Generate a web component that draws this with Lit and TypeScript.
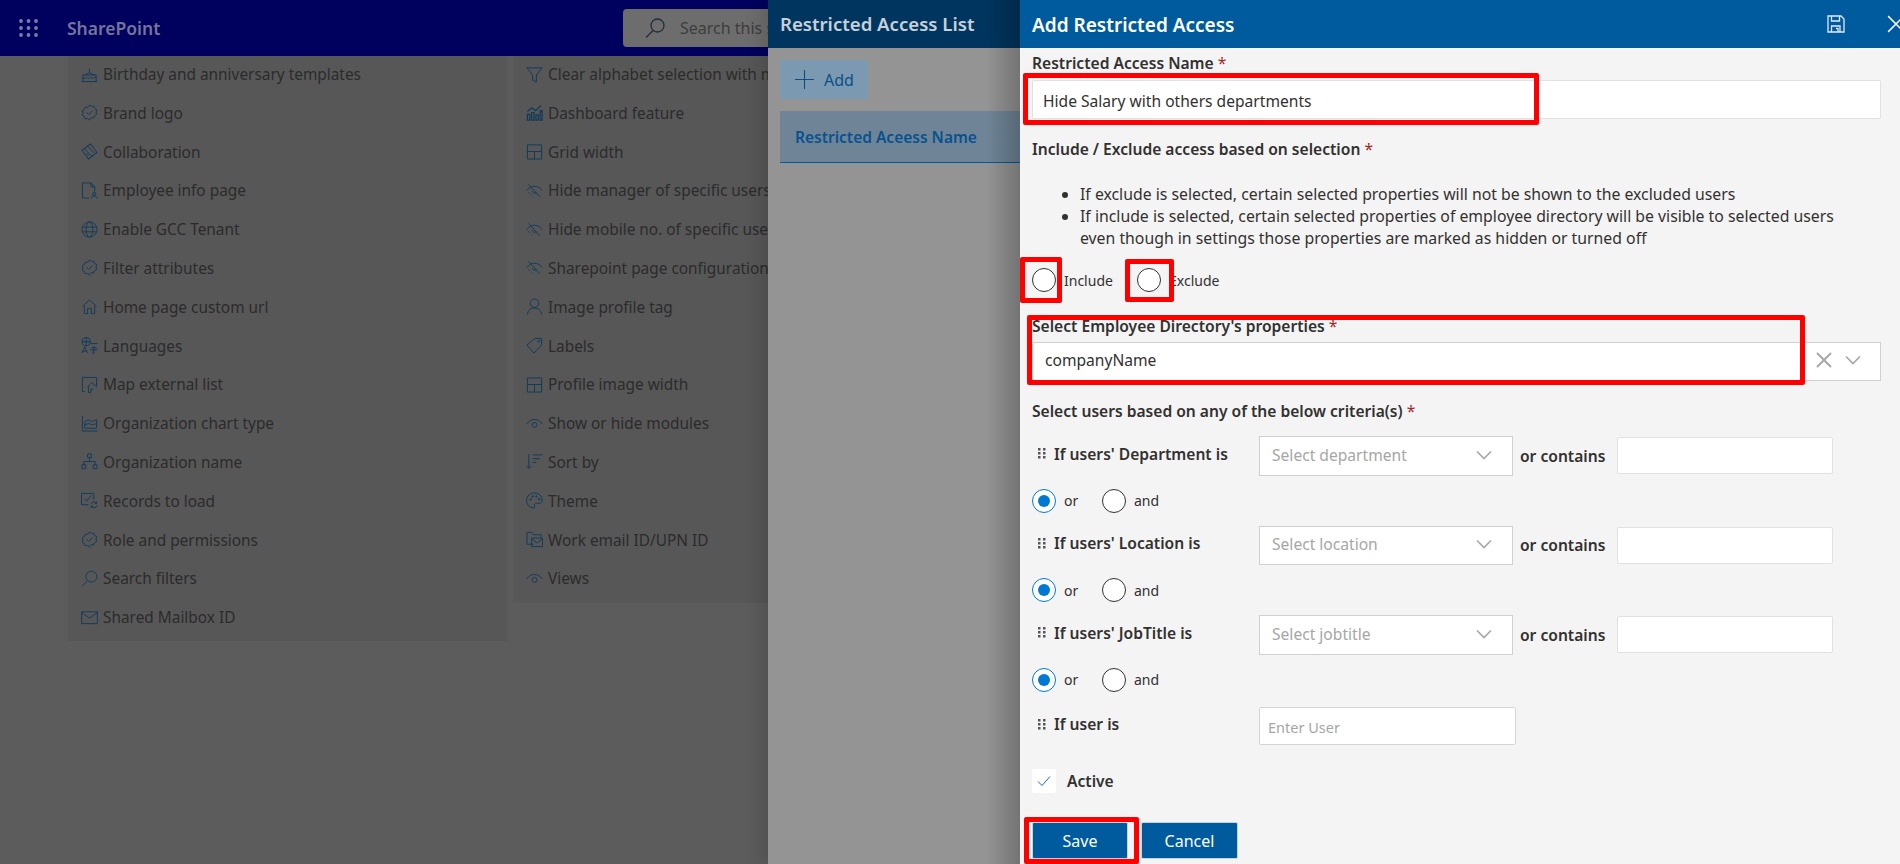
import { LitElement, css, html, svg } from "lit";
import { customElement } from "lit/decorators.js";

const icon = (body: unknown) => html`<svg class="ico" viewBox="0 0 18 18" fill="none" stroke="currentColor" stroke-width="1">${body}</svg>`;

const seal = svg`<path d="M9 1l2 1.6 2.5-.3.9 2.4 2.2 1.3-.7 2.5.7 2.5-2.2 1.3-.9 2.4-2.5-.3L9 17l-2-1.6-2.5.3-.9-2.4-2.2-1.3.7-2.5-.7-2.5 2.2-1.3.9-2.4 2.5.3z"/><path d="M5.8 9l2.2 2.2 4.2-4.2"/>`;
const eyeOff = svg`<path d="M1 9c2-3 4.800-4.500 8-4.500S15 6 17 9"/><path d="M6.500 9.500a3 3 0 0 0 4.500 2"/><path d="M2.500 2.500l12 13"/><path d="M2.500 11l1.500 1.500M6 14l1 1"/>`;
const eye = svg`<path d="M.8 9.500C2.800 6.300 5.700 4.700 9 4.700s6.200 1.600 8.200 4.800"/><circle cx="9" cy="10.500" r="2.600"/>`;
const grid = svg`<path d="M1.500 2h15v15h-15zM1.500 9h15M9 9v8"/>`;

const ICONS: Record<string, unknown> = {
  cake: svg`<path d="M.8 16.500h16.400M2 16.500V9.500h14v7M2 12c1.500 1.400 2.800 1.400 4 0 1.300 1.400 2.700 1.400 4 0 1.300 1.400 2.700 1.400 4 0l2 0M4 9.500l5-2.500 5 2.500M9 7V3"/>`,
  seal,
  shake: svg`<path d="M9 1l8 8-8 8-8-8z" transform="rotate(8 9 9)"/><path d="M4 6l5 6 3 2M7 3.500l7 7M6 11l2 2.500"/>`,
  doc: svg`<path d="M1.500 17V1h9l4 4v5M10.500 1v4h4M1.500 17h7"/><circle cx="14" cy="12.700" r="1.700"/><path d="M11 17.500c.4-2 1.500-2.800 3-2.800s2.600.8 3 2.800"/>`,
  globe: svg`<circle cx="9" cy="9" r="8"/><ellipse cx="9" cy="9" rx="3.600" ry="8"/><path d="M1.500 6.500h15M1.500 11.500h15"/>`,
  home: svg`<path d="M1.500 9L9 2l7.500 7M3.500 8v8.500H7V11h4v5.500h3.500V8"/>`,
  lang: svg`<circle cx="5.500" cy="5" r="4.300"/><path d="M1.200 5h8.600M5.500.7v8.600"/><path d="M1 17l3-6.500L7 17M2 15h4"/><path d="M10 7h7.500M11 11h5.500M9.500 13.500h8M13.500 11v6.500l-1.500-.5"/>`,
  map: svg`<path d="M4 16.500H1.500V1.500h15v9"/><path d="M6.500 12l5-5 5.500 5M8 11v6.500h2.500V14h2.500"/>`,
  area: svg`<path d="M1.500 1v16h16"/><path d="M4 14V7l3.500-2 4 2 5-2v9zM4 10.500l4-1.500 4 1.500 4.500-1.500"/>`,
  org: svg`<path d="M7 1h4v4H7zM1 12.500h4v4H1zM13 12.500h4v4h-4zM9 5v4M3 12.500V9h12v3.500"/>`,
  records: svg`<path d="M13.500 8V1.500h-13v12H8"/><path d="M3.500 7l2.500 2.500L11 3.500"/><path d="M10.500 13a3 3 0 0 1 5-1.800l1 .8M16.800 14a3 3 0 0 1-5 1.800l-1-.8M16.500 10v2h-2M10.800 17v-2h2"/>`,
  search: svg`<circle cx="11" cy="7" r="5.800"/><path d="M7 11L1 17.500"/>`,
  mail: svg`<path d="M.7 3h16.600v12.500H.7zM.7 4l8.300 5.500L17.300 4"/>`,
  filter: svg`<path d="M1 2h16l-6 7.500V17l-4-2V9.500z"/>`,
  bars: svg`<path d="M1.500 11h2.500v6H1.500zM6 9h2.500v8H6zM10.500 11.500H13V17h-2.500zM15 7h2v10h-2zM1.500 8l4.500-4 4 3 6-5.500" stroke-width="1.300"/>`,
  grid,
  eyeOff,
  eye,
  person: svg`<circle cx="9" cy="5.500" r="4.500"/><path d="M1.500 17.500c.5-4.500 3.500-7 7.500-7s7 2.500 7.500 7"/>`,
  tag: svg`<path d="M1 8.500L9.500 1.500h7v7L8.500 17z"/><circle cx="13.500" cy="4.500" r=".9"/>`,
  sort: svg`<path d="M3 1v15M.8 13.800L3 16.200l2.200-2.400M7 2h10.500M7 6h7.500M7 10h4"/>`,
  palette: svg`<path d="M9 1a8 8 0 0 0-1 16c1.500 0 1.500-1.500 1-2.500-.6-1.300.4-2.500 2-2.500h3c2 0 3-1.500 3-3.500C17 4 13.500 1 9 1z"/><circle cx="5" cy="8" r=".8"/><circle cx="7" cy="4.700" r=".8"/><circle cx="11" cy="4.700" r=".8"/><circle cx="14" cy="7.500" r=".8"/>`,
  folder: svg`<path d="M8 14H1V1.500h5l2 2.500h8v3"/><path d="M6 7.500h11.500v9H6zM6 8.500l5.800 4 5.700-4"/>`,
};

const LEFT: [string, string][] = [
  ["cake", "Birthday and anniversary templates"],
  ["seal", "Brand logo"],
  ["shake", "Collaboration"],
  ["doc", "Employee info page"],
  ["globe", "Enable GCC Tenant"],
  ["seal", "Filter attributes"],
  ["home", "Home page custom url"],
  ["lang", "Languages"],
  ["map", "Map external list"],
  ["area", "Organization chart type"],
  ["org", "Organization name"],
  ["records", "Records to load"],
  ["seal", "Role and permissions"],
  ["search", "Search filters"],
  ["mail", "Shared Mailbox ID"],
];

const RIGHT: [string, string][] = [
  ["filter", "Clear alphabet selection with multiple"],
  ["bars", "Dashboard feature"],
  ["grid", "Grid width"],
  ["eyeOff", "Hide manager of specific users"],
  ["eyeOff", "Hide mobile no. of specific users"],
  ["eyeOff", "Sharepoint page configuration"],
  ["person", "Image profile tag"],
  ["tag", "Labels"],
  ["grid", "Profile image width"],
  ["eye", "Show or hide modules"],
  ["sort", "Sort by"],
  ["palette", "Theme"],
  ["folder", "Work email ID/UPN ID"],
  ["eye", "Views"],
];

const CRITERIA = [
  { label: "If users' Department is", placeholder: "Select department" },
  { label: "If users' Location is", placeholder: "Select location" },
  { label: "If users' JobTitle is", placeholder: "Select jobtitle" },
];

const chevron = html`<svg class="chev" viewBox="0 0 16 10" fill="none" stroke="currentColor" stroke-width="1.700"><path d="M1 1.500l7 7 7-7"/></svg>`;
const gripper = html`<svg class="grip" viewBox="0 0 8 11" fill="currentColor"><rect x="0" y="0" width="2.500" height="2.500"/><rect x="5" y="0" width="2.500" height="2.500"/><rect x="0" y="4" width="2.500" height="2.500"/><rect x="5" y="4" width="2.500" height="2.500"/><rect x="0" y="8" width="2.500" height="2.500"/><rect x="5" y="8" width="2.500" height="2.500"/></svg>`;

@customElement("app-root")
export class AppRoot extends LitElement {
  private renderList(items: [string, string][]) {
    return items.map(
      ([name, text]) => html`<div class="row">${icon(ICONS[name])}<span class="row-text">${text}</span></div>`
    );
  }

  private renderCriteria(item: { label: string; placeholder: string }) {
    return html`
      <div class="criteria">
        <div class="crit-label">${gripper}<b>${item.label}</b></div>
        <div class="select"><span>${item.placeholder}</span>${chevron}</div>
        <b class="or-contains">or contains</b>
        <div class="text-box"></div>
      </div>
      <div class="radios or-and">
        <label class="radio-item or"><span class="radio on"></span>or</label>
        <label class="radio-item"><span class="radio"></span>and</label>
      </div>
    `;
  }

  protected render() {
    return html`
      <header class="suite">
        <svg class="waffle" viewBox="0 0 19 18" fill="currentColor">
          ${[2, 9.5, 17].map((x) => [2, 9, 16].map((y) => svg`<circle cx=${x} cy=${y} r="1.900"></circle>`))}
        </svg>
        <span class="brand">SharePoint</span>
        <div class="search">
          <svg class="search-ico" viewBox="0 0 20 20" fill="none" stroke="currentColor" stroke-width="1.300">
            <circle cx="12.500" cy="7.500" r="6.500"></circle><path d="M8 12.500L1 19.500"></path>
          </svg>
          <span>Search this site</span>
        </div>
      </header>

      <main class="cards">
        <section class="card one">${this.renderList(LEFT)}</section>
        <section class="card two">${this.renderList(RIGHT)}</section>
      </main>

      <aside class="list-panel">
        <div class="list-head">Restricted Access List</div>
        <button class="add">
          <svg viewBox="0 0 20 20" fill="none" stroke="currentColor" stroke-width="1.200"><path d="M10 0v20M0 10h20"></path></svg>
          Add
        </button>
        <div class="col-head">Restricted Aceess Name</div>
      </aside>

      <aside class="form-panel">
        <div class="form-head">
          <span class="form-title">Add Restricted Access</span>
          <svg class="save" viewBox="0 0 18 18" fill="none" stroke="currentColor" stroke-width="1.300">
            <path d="M1 1h13l3 3v13H1z"></path><path d="M4.500 1v5h8V1M4.500 17v-6h8.500v6M9 13.500h2V17"></path>
          </svg>
          <svg class="close" viewBox="0 0 16 16" fill="none" stroke="currentColor" stroke-width="1.300"><path d="M1 1l14 14M15 1L1 15"></path></svg>
        </div>

        <div class="form">
          <div class="label">Restricted Access Name <i>*</i></div>
          <div class="text-input">Hide Salary with others departments</div>

          <div class="label include-label">Include / Exclude access based on selection <i>*</i></div>
          <ul class="notes">
            <li>If exclude is selected, certain selected properties will not be shown to the excluded users</li>
            <li>If include is selected, certain selected properties of employee directory will be visible to selected users even though in settings those properties are marked as hidden or turned off</li>
          </ul>
          <div class="radios include">
            <label class="radio-item inc"><span class="radio"></span>Include</label>
            <label class="radio-item"><span class="radio"></span>Exclude</label>
          </div>

          <div class="label props-label">Select Employee Directory's properties <i>*</i></div>
          <div class="combo">
            <span>companyName</span>
            <svg class="clear" viewBox="0 0 16 16" fill="none" stroke="currentColor" stroke-width="2"><path d="M1 1l14 14M15 1L1 15"></path></svg>
            ${chevron}
          </div>

          <div class="label users-label">Select users based on any of the below criteria(s) <i>*</i></div>
          ${CRITERIA.map((item) => this.renderCriteria(item))}

          <div class="criteria user-row">
            <div class="crit-label user">${gripper}<b>If user is</b></div>
            <div class="user-box">Enter User</div>
          </div>

          <div class="active">
            <span class="check">
              <svg viewBox="0 0 14 12" fill="none" stroke="#0f6cbd" stroke-width="1"><path d="M1 6.500l4 4L13 1.500"></path></svg>
            </span>
            <b>Active</b>
          </div>

          <div class="actions">
            <button class="btn">Save</button>
            <button class="btn cancel">Cancel</button>
          </div>
        </div>

        <div class="mark m-name"></div>
        <div class="mark m-include"></div>
        <div class="mark m-exclude"></div>
        <div class="mark m-props"></div>
        <div class="mark m-save"></div>
      </aside>
    `;
  }

  static styles = css`
    :host {
      display: block;
      position: relative;
      width: 1900px;
      height: 864px;
      overflow: hidden;
      background: #5c5c5c;
      font-family: "Noto Sans", "Open Sans", sans-serif;
      color: #2b2b2b;
    }

    .suite {
      display: flex;
      align-items: center;
      height: 56px;
      background: #00005e;
      color: #74749c;
    }

    .waffle {
      width: 19px;
      height: 18px;
      margin-left: 19px;
      color: #7c7ca2;
    }

    .brand {
      width: 527px;
      margin-left: 29px;
      font-size: 17.500px;
      font-weight: 600;
    }

    .search {
      display: flex;
      align-items: center;
      width: 300px;
      height: 38px;
      margin-left: 29px;
      box-sizing: border-box;
      padding-left: 22px;
      border-radius: 4px;
      background: #6d6d6d;
      color: #3d3d3d;
      font-size: 16px;
    }

    .search-ico {
      width: 20px;
      height: 20px;
      margin-right: 15px;
      color: #232c3a;
    }

    .cards {
      display: flex;
      gap: 6px;
      padding-left: 68px;
    }

    .card {
      width: 439px;
      background: #575757;
    }

    .card.one {
      height: 585px;
      box-sizing: border-box;
      padding: 1px 0 0 13px;
    }

    .card.two {
      height: 547px;
      box-sizing: border-box;
      padding: 1px 0 0 13px;
    }

    .row {
      display: flex;
      align-items: center;
      gap: 5px;
      height: 20px;
      padding: 8px 0 10.800px;
      font-size: 15.400px;
      line-height: 20px;
      white-space: nowrap;
    }

    .ico {
      flex: none;
      width: 17px;
      height: 17px;
      margin-bottom: 2px;
      color: #0f3a5b;
    }

    .list-panel {
      position: absolute;
      top: 0;
      left: 768px;
      width: 252px;
      height: 864px;
      background: #949494;
      box-shadow: -8px 0 16px rgba(0, 0, 0, 0.12);
    }

    .list-head {
      height: 48px;
      padding-left: 12px;
      background: #00355f;
      color: #c6d0d9;
      font-size: 18.600px;
      font-weight: 600;
      line-height: 48px;
    }

    .add {
      display: flex;
      align-items: center;
      gap: 10px;
      width: 88px;
      height: 39px;
      margin: 12px 0 12px 12px;
      padding: 0 0 0 15px;
      border: 0;
      background: #7b9ab2;
      color: #0b4f85;
      font: inherit;
      font-size: 16px;
    }

    .add svg {
      width: 19px;
      height: 19px;
    }

    .col-head {
      box-sizing: border-box;
      height: 52px;
      margin-left: 12px;
      padding-left: 15px;
      border-bottom: 1px solid #005a9e;
      background: #6f8597;
      color: #07528f;
      font-size: 15.500px;
      font-weight: 600;
      line-height: 52px;
    }

    .form-panel {
      position: absolute;
      top: 0;
      left: 1020px;
      width: 880px;
      height: 864px;
      overflow: hidden;
      background: #f4f4f4;
      color: #323130;
    }

    /* shadow of the form panel falls on the list panel */
    .list-panel::after {
      content: "";
      position: absolute;
      top: 0;
      right: 0;
      width: 34px;
      height: 100%;
      background: linear-gradient(to right, rgba(0, 0, 0, 0), rgba(0, 0, 0, 0.22));
    }

    .form-head {
      display: flex;
      align-items: center;
      height: 48px;
      padding-left: 12px;
      background: #005a9e;
      color: #fff;
    }

    .form-title {
      flex: 1;
      padding-top: 2px;
      font-size: 19px;
      font-weight: 600;
    }

    .save {
      width: 18px;
      height: 18px;
      margin-right: 42px;
      color: #dfeaf3;
    }

    .close {
      flex: none;
      width: 18px;
      height: 18px;
      margin-right: -5px;
    }

    .form {
      display: flex;
      flex-direction: column;
      align-items: flex-start;
      padding: 5px 19px 0 12px;
    }

    .label {
      height: 20px;
      font-size: 15.600px;
      font-weight: 600;
      line-height: 20px;
      white-space: nowrap;
    }

    .label i {
      color: #a4262c;
      font-style: normal;
      font-weight: 400;
    }

    .text-input {
      box-sizing: border-box;
      width: 849px;
      height: 39px;
      margin-top: 7px;
      padding-left: 10px;
      border: 1px solid #e1e1e1;
      border-radius: 2px;
      background: #fff;
      font-size: 15.600px;
      line-height: 40px;
    }

    .include-label {
      margin-top: 20px;
    }

    .notes {
      width: 770px;
      margin: 24px 0 0;
      padding: 0 0 0 48px;
      font-size: 15.800px;
      line-height: 22px;
    }

    .radios {
      display: flex;
      height: 24px;
      font-size: 14px;
    }

    .include {
      margin-top: 19px;
    }

    .or-and {
      margin: 13px 0;
    }

    .radio-item {
      display: flex;
      align-items: center;
      gap: 8px;
    }

    .radio-item.inc {
      width: 105px;
    }

    .radio-item.or {
      width: 70px;
    }

    .radio {
      box-sizing: border-box;
      display: flex;
      align-items: center;
      justify-content: center;
      width: 24px;
      height: 24px;
      border: 1px solid #323130;
      border-radius: 50%;
      background: #fff;
    }

    .radio.on {
      border-color: #0078d4;
    }

    .radio.on::after {
      content: "";
      width: 12px;
      height: 12px;
      border-radius: 50%;
      background: #0078d4;
    }

    .props-label {
      margin-top: 24px;
    }

    .combo {
      display: flex;
      align-items: center;
      box-sizing: border-box;
      width: 849px;
      height: 39px;
      margin-top: 6px;
      padding: 0 19px 4px 12px;
      border: 1px solid #d0d0d0;
      background: #fff;
      font-size: 15.600px;
    }

    .combo span {
      flex: 1;
    }

    .clear {
      width: 16px;
      height: 16px;
      margin-right: 13px;
      color: #a8a8a8;
    }

    .chev {
      width: 16px;
      height: 10px;
      color: #a8a8a8;
    }

    .users-label {
      margin: 20px 0 15px;
    }

    .criteria {
      display: flex;
      align-items: center;
      height: 39.500px;
      font-size: 15.600px;
    }

    .criteria b {
      font-weight: 600;
    }

    .crit-label {
      display: flex;
      align-items: center;
      gap: 8px;
      width: 227px;
      box-sizing: border-box;
      padding: 0 0 4px 6px;
      white-space: nowrap;
    }

    .grip {
      width: 8px;
      height: 11px;
      color: #555;
    }

    .select {
      display: flex;
      align-items: center;
      justify-content: space-between;
      box-sizing: border-box;
      width: 254px;
      height: 39.500px;
      padding: 0 20px 2px 12px;
      border: 1px solid #d0d0d0;
      background: #fff;
      color: #a6a6a6;
      font-size: 15.600px;
    }

    .or-contains {
      width: 85px;
      margin: 0 12px 0 7px;
      white-space: nowrap;
    }

    .text-box {
      box-sizing: border-box;
      width: 216px;
      height: 37px;
      border: 1px solid #e1e1e1;
      border-radius: 2px;
      background: #fff;
    }

    .user-row {
      height: 38px;
      margin-top: 2.500px;
    }

    .crit-label.user {
      gap: 8px;
      padding-bottom: 4px;
    }

    .user-box {
      box-sizing: border-box;
      width: 257px;
      height: 38px;
      padding-left: 8px;
      border: 1px solid #d6d6d6;
      border-radius: 2px;
      background: #fff;
      color: #a6a6a6;
      font-size: 14.500px;
      line-height: 38px;
    }

    .active {
      display: flex;
      align-items: center;
      gap: 11px;
      height: 24px;
      margin-top: 24px;
      font-size: 15.600px;
    }

    .active b {
      font-weight: 600;
    }

    .check {
      display: flex;
      align-items: center;
      justify-content: center;
      width: 24px;
      height: 24px;
      border-radius: 2px;
      background: #fff;
    }

    .check svg {
      width: 14px;
      height: 12px;
    }

    .actions {
      display: flex;
      gap: 13px;
      margin-top: 29px;
    }

    .btn {
      box-sizing: border-box;
      width: 96px;
      height: 37px;
      border: 1px solid #c9d3da;
      border-radius: 2px;
      background: #005a9e;
      color: #fff;
      font: inherit;
      font-size: 16px;
    }

    .btn.cancel {
      width: 97px;
    }

    /* red callouts painted over the screenshot */
    .mark {
      position: absolute;
      box-sizing: border-box;
      border: 5px solid #ff0000;
      border-radius: 2px;
    }

    .m-name {
      top: 73px;
      left: 3px;
      width: 516px;
      height: 52px;
    }

    .m-include {
      top: 257px;
      left: 0;
      width: 42px;
      height: 46px;
    }

    .m-exclude {
      top: 259px;
      left: 105px;
      width: 49px;
      height: 43px;
    }

    .m-props {
      top: 315px;
      left: 7px;
      width: 778px;
      height: 70px;
    }

    .m-save {
      top: 817px;
      left: 4px;
      width: 115px;
      height: 47px;
    }
  `;
}

declare global {
  interface HTMLElementTagNameMap {
    "app-root": AppRoot;
  }
}
